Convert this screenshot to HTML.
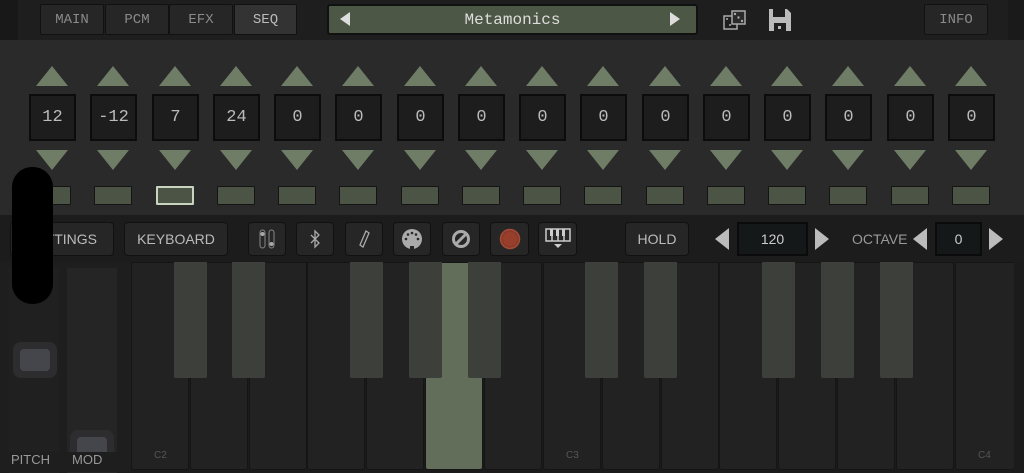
<!DOCTYPE html>
<html><head><meta charset="utf-8"><style>
*{margin:0;padding:0;box-sizing:border-box}
body{width:1024px;height:472px;overflow:hidden;background:#1b1b1b;position:relative;font-family:"Liberation Sans",sans-serif}
.a{position:absolute}
.tab{position:absolute;top:4px;height:31px;border:1px solid #111;border-radius:2px;background:#262626;color:#8a8a8a;font:14px "Liberation Mono",monospace;display:flex;align-items:center;justify-content:center}
.col{position:absolute;top:66px;width:50px;height:140px}
.up{position:absolute;left:9px;top:0;width:0;height:0;border-left:16px solid transparent;border-right:16px solid transparent;border-bottom:20px solid #6f7d66}
.dn{position:absolute;left:9px;top:84px;width:0;height:0;border-left:16px solid transparent;border-right:16px solid transparent;border-top:20px solid #6f7d66}
.box{position:absolute;left:2px;top:28px;width:47px;height:47px;border:2px solid #0c0c0c;background:#1d1d1d;color:#bbb;font:17px "Liberation Mono",monospace;display:flex;align-items:center;justify-content:center}
.st{position:absolute;left:6px;top:120px;width:38px;height:19px;background:#4c5446;border:1px solid #141414;border-radius:1px}
.btn{position:absolute;top:222px;height:34px;background:#262626;border:1px solid #111;border-radius:4px;color:#bbb;font-size:14px;display:flex;align-items:center;justify-content:center}
.wk{position:absolute;top:262px;width:58px;height:208px;background:#222;border:1px solid #151515;border-radius:0 0 3px 3px}
.bk{position:absolute;top:262px;width:33px;height:116px;background:#3c3f3a;border-radius:0 0 2px 2px}
.lab{position:absolute;top:450px;color:#555;font:10px "Liberation Sans",sans-serif}
</style></head><body>
<div class="a" style="left:0;top:0;width:1024px;height:40px;background:#1e1e1e"></div>
<div class="a" style="left:0;top:0;width:18px;height:40px;background:#181818"></div>
<div class="a" style="left:1008px;top:0;width:16px;height:40px;background:#1a1a1a"></div>
<div class="a" style="left:0;top:40px;width:1024px;height:175px;background:#2a2a2a"></div>
<div class="tab" style="left:40px;width:64px">MAIN</div>
<div class="tab" style="left:105px;width:64px">PCM</div>
<div class="tab" style="left:169px;width:64px">EFX</div>
<div class="tab" style="left:234px;width:63px;background:#333;color:#bbb">SEQ</div>
<div class="a" style="left:327px;top:4px;width:371px;height:31px;background:#4d5746;border:2px solid #111;border-radius:3px;color:#ddd;font:16px 'Liberation Mono',monospace;display:flex;align-items:center;justify-content:center">Metamonics</div>
<div class="a" style="left:340px;top:12px;border-top:7px solid transparent;border-bottom:7px solid transparent;border-right:10px solid #ddd"></div>
<div class="a" style="left:670px;top:12px;border-top:7px solid transparent;border-bottom:7px solid transparent;border-left:10px solid #ddd"></div>
<svg class="a" style="left:722px;top:8px" width="26" height="24" viewBox="0 0 26 24"><rect x="2" y="8" width="13" height="13" fill="none" stroke="#aaa" stroke-width="1.5"/><rect x="10" y="3" width="13" height="13" fill="#2a2a2a" stroke="#aaa" stroke-width="1.5"/><circle cx="13" cy="6" r="1.2" fill="#aaa"/><circle cx="20" cy="13" r="1.2" fill="#aaa"/><circle cx="16.5" cy="9.5" r="1.2" fill="#aaa"/><circle cx="5" cy="11" r="1" fill="#aaa"/><circle cx="8" cy="17" r="1" fill="#aaa"/></svg>
<svg class="a" style="left:768px;top:8px" width="24" height="24" viewBox="0 0 24 24"><path d="M1 1h18l4 4v18H1z" fill="#bbb"/><rect x="5" y="1" width="12" height="8" fill="#1e1e1e"/><rect x="6" y="15" width="12" height="8" fill="#1e1e1e"/><rect x="10" y="18" width="3" height="3" fill="#bbb"/></svg>
<div class="tab" style="left:924px;width:64px">INFO</div>

<div class="col" style="left:27px"><div class="up"></div><div class="box">12</div><div class="dn"></div><div class="st"></div></div>
<div class="col" style="left:88px"><div class="up"></div><div class="box">-12</div><div class="dn"></div><div class="st"></div></div>
<div class="col" style="left:150px"><div class="up"></div><div class="box">7</div><div class="dn"></div><div class="st" style="border:2px solid #c9d4c0"></div></div>
<div class="col" style="left:211px"><div class="up"></div><div class="box">24</div><div class="dn"></div><div class="st"></div></div>
<div class="col" style="left:272px"><div class="up"></div><div class="box">0</div><div class="dn"></div><div class="st"></div></div>
<div class="col" style="left:333px"><div class="up"></div><div class="box">0</div><div class="dn"></div><div class="st"></div></div>
<div class="col" style="left:395px"><div class="up"></div><div class="box">0</div><div class="dn"></div><div class="st"></div></div>
<div class="col" style="left:456px"><div class="up"></div><div class="box">0</div><div class="dn"></div><div class="st"></div></div>
<div class="col" style="left:517px"><div class="up"></div><div class="box">0</div><div class="dn"></div><div class="st"></div></div>
<div class="col" style="left:578px"><div class="up"></div><div class="box">0</div><div class="dn"></div><div class="st"></div></div>
<div class="col" style="left:640px"><div class="up"></div><div class="box">0</div><div class="dn"></div><div class="st"></div></div>
<div class="col" style="left:701px"><div class="up"></div><div class="box">0</div><div class="dn"></div><div class="st"></div></div>
<div class="col" style="left:762px"><div class="up"></div><div class="box">0</div><div class="dn"></div><div class="st"></div></div>
<div class="col" style="left:823px"><div class="up"></div><div class="box">0</div><div class="dn"></div><div class="st"></div></div>
<div class="col" style="left:885px"><div class="up"></div><div class="box">0</div><div class="dn"></div><div class="st"></div></div>
<div class="col" style="left:946px"><div class="up"></div><div class="box">0</div><div class="dn"></div><div class="st"></div></div>

<div class="a" style="left:0;top:215px;width:1024px;height:47px;background:#1c1c1c"></div>
<div class="btn" style="left:10px;width:104px">SETTINGS</div>
<div class="btn" style="left:124px;width:104px">KEYBOARD</div>
<div class="btn" style="left:248px;width:38px"><svg width="18" height="20" viewBox="0 0 18 20"><rect x="2" y="1" width="5" height="18" rx="2.5" fill="none" stroke="#888"/><rect x="11" y="1" width="5" height="18" rx="2.5" fill="none" stroke="#888"/><circle cx="4.5" cy="5" r="2" fill="#aaa"/><circle cx="13.5" cy="15" r="2" fill="#aaa"/></svg></div>
<div class="btn" style="left:296px;width:38px"><svg width="12" height="20" viewBox="0 0 12 20"><path d="M2 6l8 8-4 4V2l4 4-8 8" fill="none" stroke="#aaa" stroke-width="1.3"/></svg></div>
<div class="btn" style="left:345px;width:38px"><svg width="12" height="20" viewBox="0 0 12 20"><path d="M8 2l3 2-6 14-3-2z" fill="none" stroke="#aaa" stroke-width="1.3"/></svg></div>
<div class="btn" style="left:393px;width:38px"><svg width="22" height="22" viewBox="0 0 22 22"><circle cx="11" cy="11" r="10" fill="#aaa"/><circle cx="5" cy="11" r="1.3" fill="#262626"/><circle cx="17" cy="11" r="1.3" fill="#262626"/><circle cx="7" cy="6.5" r="1.3" fill="#262626"/><circle cx="15" cy="6.5" r="1.3" fill="#262626"/><circle cx="11" cy="5" r="1.3" fill="#262626"/><rect x="9" y="18" width="4" height="3" fill="#262626"/></svg></div>
<div class="btn" style="left:442px;width:38px"><svg width="20" height="20" viewBox="0 0 20 20"><circle cx="10" cy="10" r="7.5" fill="none" stroke="#aaa" stroke-width="3"/><path d="M5 15L15 5" stroke="#aaa" stroke-width="3"/></svg></div>
<div class="btn" style="left:490px;width:39px"><svg width="22" height="22" viewBox="0 0 22 22"><circle cx="11" cy="11" r="9.5" fill="#8a3a2a" stroke="#a24a36" stroke-width="1.5"/><circle cx="11" cy="11" r="7" fill="#983f2c"/></svg></div>
<div class="btn" style="left:538px;width:39px"><svg width="26" height="22" viewBox="0 0 26 22"><rect x="1" y="1" width="24" height="12" fill="none" stroke="#ccc" stroke-width="1.5"/><path d="M7 1v12M13 1v12M19 1v12" stroke="#ccc" stroke-width="1.5"/><rect x="5" y="1" width="3" height="7" fill="#ccc"/><rect x="11" y="1" width="3" height="7" fill="#ccc"/><rect x="17" y="1" width="3" height="7" fill="#ccc"/><path d="M9 16h8l-4 4z" fill="#ccc"/></svg></div>
<div class="btn" style="left:625px;width:64px">HOLD</div>
<div class="a" style="left:715px;top:228px;border-top:11px solid transparent;border-bottom:11px solid transparent;border-right:14px solid #bbb"></div>
<div class="a" style="left:737px;top:222px;width:71px;height:34px;background:#151818;border:2px solid #0b0b0b;color:#ccc;font-size:14px;display:flex;align-items:center;justify-content:center">120</div>
<div class="a" style="left:815px;top:228px;border-top:11px solid transparent;border-bottom:11px solid transparent;border-left:14px solid #bbb"></div>
<div class="a" style="left:852px;top:231px;color:#999;font-size:14px">OCTAVE</div>
<div class="a" style="left:913px;top:228px;border-top:11px solid transparent;border-bottom:11px solid transparent;border-right:14px solid #bbb"></div>
<div class="a" style="left:935px;top:222px;width:47px;height:34px;background:#151818;border:2px solid #0b0b0b;color:#ccc;font-size:14px;display:flex;align-items:center;justify-content:center">0</div>
<div class="a" style="left:989px;top:228px;border-top:11px solid transparent;border-bottom:11px solid transparent;border-left:14px solid #bbb"></div>

<div class="a" style="left:0;top:262px;width:131px;height:210px;background:#1e1e1e"></div>
<div class="a" style="left:9px;top:268px;width:50px;height:205px;background:#202020"></div>
<div class="a" style="left:67px;top:268px;width:50px;height:205px;background:#252525"></div>
<div class="a" style="left:13px;top:342px;width:44px;height:36px;border-radius:8px;background:#2d2d30"></div>
<div class="a" style="left:20px;top:349px;width:30px;height:22px;border-radius:4px;background:#45464c"></div>
<div class="a" style="left:70px;top:430px;width:44px;height:30px;border-radius:8px 8px 0 0;background:#2d2d30"></div>
<div class="a" style="left:77px;top:437px;width:30px;height:20px;border-radius:4px;background:#45464c"></div>
<div class="a" style="left:0;top:452px;width:131px;height:20px;background:#1e1e1e"></div>
<div class="a" style="left:11px;top:452px;color:#999;font-size:13px">PITCH</div>
<div class="a" style="left:72px;top:452px;color:#999;font-size:13px">MOD</div>

<div class="wk" style="left:131px"></div><div class="wk" style="left:190px"></div><div class="wk" style="left:249px"></div><div class="wk" style="left:307px"></div><div class="wk" style="left:366px"></div><div class="wk" style="left:425px;background:#626e59"></div><div class="wk" style="left:484px"></div>
<div class="wk" style="left:543px"></div><div class="wk" style="left:602px"></div><div class="wk" style="left:661px"></div><div class="wk" style="left:719px"></div><div class="wk" style="left:778px"></div><div class="wk" style="left:837px"></div><div class="wk" style="left:896px"></div>
<div class="wk" style="left:955px;width:60px"></div>
<div class="a" style="left:1014px;top:262px;width:10px;height:210px;background:#1b1b1b"></div>
<div class="bk" style="left:174px"></div><div class="bk" style="left:232px"></div><div class="bk" style="left:350px"></div><div class="bk" style="left:409px"></div><div class="bk" style="left:468px"></div>
<div class="bk" style="left:585px"></div><div class="bk" style="left:644px"></div><div class="bk" style="left:762px"></div><div class="bk" style="left:821px"></div><div class="bk" style="left:880px"></div>
<div class="lab" style="left:154px">C2</div><div class="lab" style="left:566px">C3</div><div class="lab" style="left:978px">C4</div>

<div class="a" style="left:12px;top:167px;width:41px;height:137px;background:#000;border-radius:20px"></div>
</body></html>
